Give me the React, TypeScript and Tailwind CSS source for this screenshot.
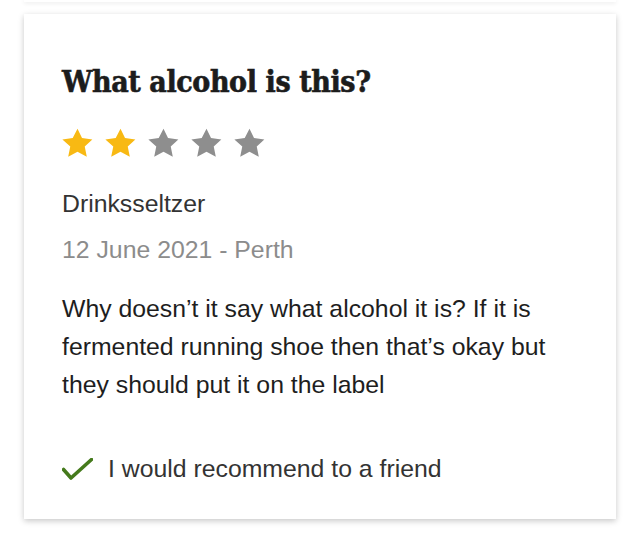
import React from "react";

const Star = ({ color }: { color: string }) => (
  <svg width="31" height="30" viewBox="0 0 24 23" className="block">
    <path
      d="M12 0.4l3.5 7.3 8 1-5.9 5.5 1.6 8L12 18.3l-7.2 3.9 1.6-8L0.3 8.7l8-1z"
      fill={color}
    />
  </svg>
);

export default function App() {
  const sans = { fontFamily: '"Liberation Sans", Arial, sans-serif' };
  return (
    <div className="w-[640px] h-[537px] bg-white overflow-hidden" style={sans}>
      <div className="ml-[24px] w-[592px] h-[2px] bg-white shadow-[0_1px_4px_rgba(0,0,0,0.12)]" />
      <div className="ml-[24px] mt-[12px] w-[592px] h-[505px] bg-white shadow-[0_2px_6px_rgba(0,0,0,0.22)] pl-[38px] pt-[50px]">
        <h1
          className="text-[30px] leading-[36px] font-bold text-[#1c1c1c] tracking-[-0.4px] [-webkit-text-stroke:0.6px_#1c1c1c]"
          style={{ fontFamily: '"DejaVu Serif Condensed", "DejaVu Serif", serif' }}
        >
          What alcohol is this?
        </h1>
        <div className="mt-[28px] flex gap-[12px]">
          <Star color="#f8b913" />
          <Star color="#f8b913" />
          <Star color="#8e8e8e" />
          <Star color="#8e8e8e" />
          <Star color="#8e8e8e" />
        </div>
        <div className="mt-[31px] text-[24.8px] leading-[30px] text-[#333333]">Drinksseltzer</div>
        <div className="mt-[16px] text-[24.8px] leading-[30px] text-[#8c8c8c]">12 June 2021 - Perth</div>
        <p className="mt-[25px] text-[24.8px] leading-[38px] text-[#1e1e1e] w-[510px]">
          Why doesn’t it say what alcohol it is? If it is fermented running shoe then that’s okay but they should put it on the label
        </p>
        <div className="mt-[50px] flex items-center gap-[15px]">
          <svg width="31" height="23" viewBox="0 0 31 23" className="block">
            <path d="M1.5 11.5l7.5 8.5L29.5 1.5" fill="none" stroke="#457a1c" strokeWidth="3.6" strokeLinecap="round" strokeLinejoin="round" />
          </svg>
          <span className="text-[24.8px] leading-[30px] text-[#333333]">I would recommend to a friend</span>
        </div>
      </div>
    </div>
  );
}
